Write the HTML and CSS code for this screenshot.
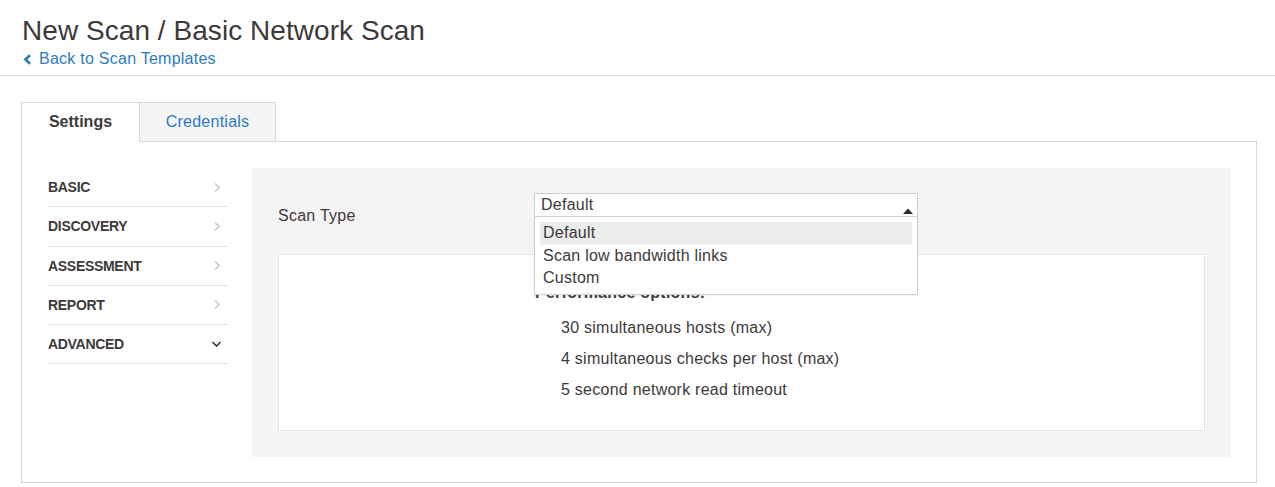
FILE: index.html
```html
<!DOCTYPE html>
<html>
<head>
<meta charset="utf-8">
<title>New Scan / Basic Network Scan</title>
<link rel="stylesheet" href="styles.css">
</head>
<body>
<header class="header">
  <h1 class="title">New Scan / Basic Network Scan</h1>
  <a class="back" href="#">
    <svg class="back-icon" width="9" height="11" viewBox="0 0 9 11"><polyline points="7,1.2 2.4,5.5 7,9.8" fill="none" stroke="currentColor" stroke-width="2.6"/></svg>
    <span>Back to Scan Templates</span>
  </a>
</header>
<main class="main">
  <nav class="tabs">
    <div class="tab tab-active">Settings</div>
    <div class="tab tab-inactive">Credentials</div>
  </nav>
  <section class="panel">
    <ul class="sidebar">
      <li class="side-item"><span>BASIC</span><svg class="chev" width="8" height="11" viewBox="0 0 8 11"><polyline points="2,1.5 6,5.5 2,9.5" fill="none" stroke="currentColor" stroke-width="1.6"/></svg></li>
      <li class="side-item"><span>DISCOVERY</span><svg class="chev" width="8" height="11" viewBox="0 0 8 11"><polyline points="2,1.5 6,5.5 2,9.5" fill="none" stroke="currentColor" stroke-width="1.6"/></svg></li>
      <li class="side-item"><span>ASSESSMENT</span><svg class="chev" width="8" height="11" viewBox="0 0 8 11"><polyline points="2,1.5 6,5.5 2,9.5" fill="none" stroke="currentColor" stroke-width="1.6"/></svg></li>
      <li class="side-item"><span>REPORT</span><svg class="chev" width="8" height="11" viewBox="0 0 8 11"><polyline points="2,1.5 6,5.5 2,9.5" fill="none" stroke="currentColor" stroke-width="1.6"/></svg></li>
      <li class="side-item"><span>ADVANCED</span><svg class="chev chev-down" width="11" height="8" viewBox="0 0 11 8"><polyline points="1.5,2 5.5,6 9.5,2" fill="none" stroke="currentColor" stroke-width="1.6"/></svg></li>
    </ul>
    <div class="content">
      <div class="field-row">
        <label class="field-label">Scan Type</label>
        <div class="select-wrap">
          <div class="select">
            <span>Default</span>
            <svg class="select-arrow" width="10" height="6" viewBox="0 0 10 6"><polygon points="0,6 5,0.5 10,6" fill="#2f2b2b"/></svg>
          </div>
          <ul class="dropdown">
            <li class="option option-hl">Default</li>
            <li class="option">Scan low bandwidth links</li>
            <li class="option">Custom</li>
          </ul>
        </div>
      </div>
      <div class="info-box">
        <div class="info-title">Performance options:</div>
        <ul class="info-list">
          <li>30 simultaneous hosts (max)</li>
          <li>4 simultaneous checks per host (max)</li>
          <li>5 second network read timeout</li>
        </ul>
      </div>
    </div>
  </section>
</main>
</body>
</html>
```
FILE: styles.css
```css
* { box-sizing: border-box; }
html, body { margin: 0; padding: 0; background: #fff; }
body {
  font-family: "Liberation Sans", Arial, sans-serif;
  color: #3e3939;
  font-size: 16px;
  letter-spacing: 0.25px;
}
ul { list-style: none; margin: 0; padding: 0; }

.header {
  padding: 15px 0 6px 22px;
  border-bottom: 1px solid #dcdcdc;
}
.title {
  margin: 0;
  font-size: 28px;
  line-height: 32px;
  font-weight: normal;
  letter-spacing: 0.05px;
  color: #3e3939;
}
.back {
  margin-top: 2px;
  display: flex;
  align-items: center;
  gap: 7px;
  height: 20px;
  line-height: 20px;
  font-size: 16px;
  color: #2b7bbf;
  text-decoration: none;
}
.back-icon { margin-left: 1px; margin-top: 1px; }

.main {
  padding: 26px 18px 5px 21px;
}
.tabs {
  display: flex;
  height: 39px;
}
.tab {
  height: 39px;
  line-height: 38px;
  text-align: center;
  border: 1px solid #d9d9d4;
  border-bottom: none;
  font-size: 16px;
}
.tab-active {
  width: 119px;
  font-weight: bold;
  letter-spacing: 0;
  background: #fff;
  color: #3e3939;
  height: 40px;
  position: relative;
  z-index: 1;
}
.tab-inactive {
  width: 136px;
  border-left: none;
  background: #f5f5f5;
  color: #2b7bbf;
}

.panel {
  border: 1px solid #d9d9d4;
  height: 342px;
  padding: 26px 25px 25px 26px;
  display: flex;
  gap: 25px;
}
.sidebar {
  width: 179px;
  flex: none;
}
.side-item {
  display: flex;
  justify-content: space-between;
  align-items: center;
  height: 39.25px;
  line-height: 38.25px;
  border-bottom: 1px dotted #cfccc6;
  font-size: 14px;
  font-weight: bold;
  letter-spacing: -0.3px;
  color: #3e3939;
}
.chev { color: #c9c9c9; margin-right: 6px; }
.chev-down { color: #3e3939; margin-right: 5px; }

.content {
  flex: 1;
  background: #f4f4f4;
  padding: 25px 26px 26px 26px;
  display: flex;
  flex-direction: column;
}
.field-row {
  display: flex;
  height: 24px;
}
.field-label {
  width: 256px;
  flex: none;
  margin-top: 13px;
  line-height: 20px;
  height: 20px;
  font-size: 16px;
}
.select-wrap {
  width: 384px;
  position: relative;
  z-index: 2;
}
.select {
  height: 24px;
  border: 1px solid #cfcfcf;
  background: #fff;
  line-height: 22px;
  padding-left: 6px;
  display: flex;
  justify-content: space-between;
  align-items: flex-end;
}
.select-arrow { margin: 0 4px 2px 0; }
.dropdown {
  position: absolute;
  top: 24px;
  left: 0;
  width: 384px;
  background: #fff;
  border: 1px solid #cfcfcf;
  border-top: none;
  padding: 5px 5px 4px 5px;
  box-shadow: 0 1px 2px rgba(0,0,0,0.06);
}
.option {
  height: 22.5px;
  line-height: 22.5px;
  padding-left: 3px;
  font-size: 16px;
}
.option-hl { background: #ebecec; }

.info-box {
  flex: 1;
  margin-top: 37px;
  background: #fff;
  border: 1px dotted #c9c9c9;
  padding: 28px 0 0 256px;
}
.info-title {
  font-weight: bold;
  line-height: 20px;
  font-size: 16px;
}
.info-list {
  margin-top: 9px;
  padding-left: 26px;
}
.info-list li {
  line-height: 31px;
  height: 31px;
  font-size: 16px;
}
```
